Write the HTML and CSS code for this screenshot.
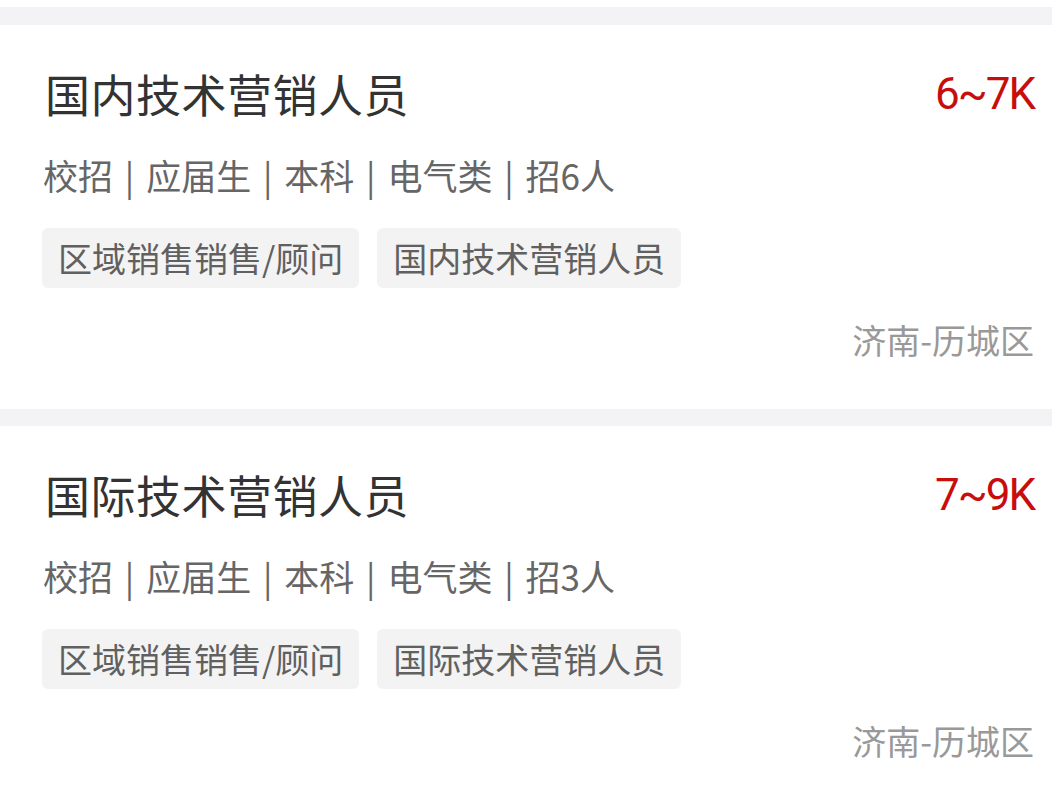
FILE: index.html
```html
<!DOCTYPE html>
<html lang="zh-CN">
<head>
<meta charset="utf-8">
<title>职位列表</title>
<link rel="stylesheet" href="styles.css">
</head>
<body>
<div class="list">
  <div class="stub"></div>
  <div class="card">
    <div class="head">
      <div class="title">国内技术营销人员</div>
      <div class="salary">6~7K</div>
    </div>
    <div class="meta">校招 | 应届生 | 本科 | 电气类 | 招6人</div>
    <div class="tags">
      <span class="tag">区域销售销售/顾问</span>
      <span class="tag">国内技术营销人员</span>
    </div>
    <div class="loc">济南-历城区</div>
  </div>
  <div class="card">
    <div class="head">
      <div class="title">国际技术营销人员</div>
      <div class="salary">7~9K</div>
    </div>
    <div class="meta">校招 | 应届生 | 本科 | 电气类 | 招3人</div>
    <div class="tags">
      <span class="tag">区域销售销售/顾问</span>
      <span class="tag">国际技术营销人员</span>
    </div>
    <div class="loc">济南-历城区</div>
  </div>
</div>
</body>
</html>
```
FILE: styles.css
```css
html, body {
  margin: 0;
  padding: 0;
  background: #f3f3f6;
  font-family: "Noto Sans CJK SC", "Noto Sans", sans-serif;
}
.list {
  display: flex;
  flex-direction: column;
  gap: 17px;
}
.stub {
  height: 7px;
  background: #fff;
  margin-bottom: 1px;
}
.card {
  background: #fff;
  padding: 37px 18px 44px 42px;
  display: flex;
  flex-direction: column;
}
.head {
  display: flex;
  justify-content: space-between;
  align-items: center;
  height: 64px;
}
.title {
  font-size: 45px;
  line-height: 64px;
  font-weight: 400;
  letter-spacing: 0.5px;
  color: #333;
  padding-left: 3px;
}
.salary {
  font-family: Roboto, "Liberation Sans", sans-serif;
  font-size: 44px;
  line-height: 64px;
  letter-spacing: -2px;
  color: #c80d0d;
}
.meta {
  margin-top: 24px;
  font-size: 35px;
  line-height: 50px;
  word-spacing: 4px;
  color: #666;
  padding-left: 1px;
}
.tags {
  margin-top: 28px;
  display: flex;
  gap: 18px;
}
.tag {
  height: 60px;
  line-height: 60px;
  padding: 0 16px;
  font-size: 34px;
  color: #606060;
  background: #f3f3f3;
  border-radius: 6px;
}
.loc {
  margin-top: 27px;
  align-self: flex-end;
  font-size: 34px;
  line-height: 50px;
  color: #999;
}
```
